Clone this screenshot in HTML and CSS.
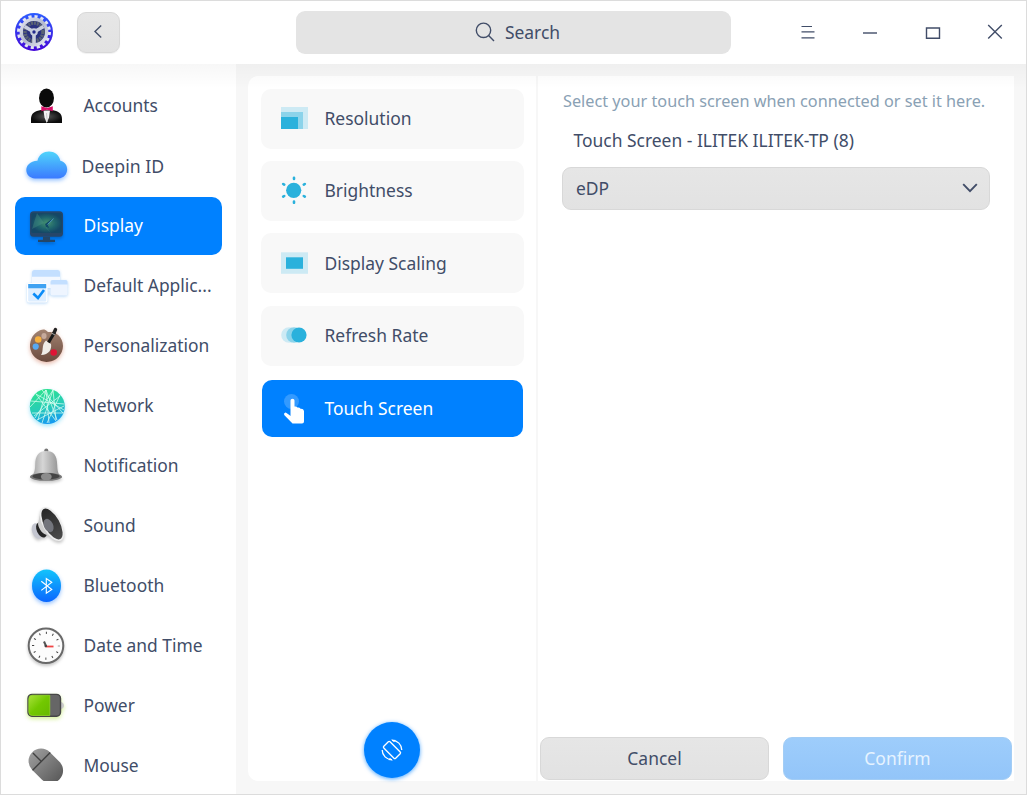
FILE: index.html
```html
<!DOCTYPE html>
<html lang="en">
<head>
<meta charset="utf-8">
<title>Control Center</title>
<link rel="stylesheet" href="styles.css">
</head>
<body>
<div class="window">
  <header class="titlebar">
    <svg class="logo" viewBox="0 0 40 40">
      <defs>
        <linearGradient id="lg" x1="0" y1="0" x2="0" y2="1"><stop offset="0" stop-color="#2b5cff"/><stop offset="1" stop-color="#4407d8"/></linearGradient>
        <linearGradient id="lm" x1="0" y1="0" x2="1" y2="1"><stop offset="0" stop-color="#e8eaf2"/><stop offset=".5" stop-color="#b3b9cd"/><stop offset="1" stop-color="#eceef6"/></linearGradient>
      </defs>
      <circle cx="20" cy="20" r="19" fill="url(#lg)"/>
      <circle cx="20" cy="20" r="15.3" fill="none" stroke="#e2e5f2" stroke-width="3.4" stroke-dasharray="3.1 2.91"/>
      <circle cx="20" cy="20" r="14.4" fill="url(#lm)"/>
      <circle cx="20" cy="20" r="11" fill="#2a3180"/>
      <circle cx="20" cy="20" r="9" fill="none" stroke="#596273" stroke-width="3.600" stroke-dasharray="2.2 .8"/>
      <path d="M20 20V31M20 20L10.500 14.500M20 20L29.500 14.500" stroke="#c9cedd" stroke-width="3.600"/>
      <circle cx="20" cy="20" r="3.800" fill="#c9cedd"/>
      <circle cx="20" cy="20" r="1.700" fill="#252b8e"/>
    </svg>
    <button class="btn back" aria-label="Back"><svg viewBox="0 0 10 14" width="10" height="14"><path d="M8.200 .5 2 6.500l6.200 6" class="line"/></svg></button>
    <div class="search">
      <svg viewBox="0 0 20 20" width="20" height="20"><circle cx="8.500" cy="8.300" r="7.200" class="line"/><path d="M13.600 13.400 19 18.900" class="line"/></svg>
      <span>Search</span>
    </div>
    <div class="controls">
      <svg viewBox="0 0 16 16" width="16" height="16"><path d="M1.500 2.500h10.500M1.500 7.800h13M1.500 13.800h13" class="line thin"/></svg>
      <svg viewBox="0 0 16 16" width="16" height="16"><path d="M1 9h14" class="line"/></svg>
      <svg viewBox="0 0 16 16" width="16" height="16"><path d="M1.500 4h13v10.300h-13z" class="line"/></svg>
      <svg viewBox="0 0 16 16" width="16" height="16"><path d="M1.200 1 14.800 14.600M14.800 1 1.200 14.600" class="line"/></svg>
    </div>
  </header>
  <div class="body">
    <nav class="sidebar">
      <a class="item">
        <svg class="icon" viewBox="0 0 48 48">
          <defs><radialGradient id="suit"><stop offset="0" stop-color="#555"/><stop offset="1" stop-color="#0b0b0b"/></radialGradient></defs>
          <ellipse cx="24.500" cy="16" rx="7.500" ry="9.400" fill="#0a0a0a"/>
          <path d="M9 41v-4c0-6 4-8 10-9h11c6 1 10 3 10 9v4z" fill="url(#suit)"/>
          <path d="M21.500 28.500h6.500l-1 7-2.300 5.500-2.200-5.500z" fill="#f3f3f3"/><path d="m24.500 31 .8 9" stroke="#bbb" stroke-width=".7"/>
          <path d="M19.300 24.300 25 26 30.800 24.300v5L25 27.800l-5.700 1.500z" fill="#d80f67"/>
        </svg><span>Accounts</span></a>
      <a class="item cloud">
        <svg class="icon glow-blue" viewBox="0 0 48 48">
          <defs><linearGradient id="cl" x1="0" y1="10" x2="0" y2="38" gradientUnits="userSpaceOnUse"><stop offset="0" stop-color="#4fd6fb"/><stop offset="1" stop-color="#3b78ff"/></linearGradient></defs>
          <path d="M13 37.500C1.500 37 .5 20.500 15.500 19.800 18 7.500 36 7.500 38.300 19.800 48.500 22 47 37.500 36 37.500z" fill="url(#cl)"/>
        </svg><span>Deepin ID</span></a>
      <a class="item active">
        <svg class="icon shade" viewBox="0 0 48 48">
          <defs><radialGradient id="scr"><stop offset="0" stop-color="#43906f"/><stop offset=".6" stop-color="#1e646d"/><stop offset="1" stop-color="#154766"/></radialGradient></defs>
          <rect x="8" y="9.300" width="33" height="25.500" rx="3.500" fill="#26466a"/>
          <rect x="9.300" y="11" width="30.500" height="20" rx="1.500" fill="url(#scr)"/>
          <path d="m15 11 7 10-12 6zM23 22l7-4 2-1-4 5-3 4 4 5-5-5z" fill="#4f9b88" opacity=".35"/>
          <path d="m30 17-7 5 1 3 3 1-1-3z" fill="#114a67"/>
          <path d="m31.500 16.500-6 6" stroke="#478bb4"/>
          <path d="M21 34.800h7v3h5v2.300H16v-2.300h5z" fill="#234668"/>
        </svg><span>Display</span></a>
      <a class="item">
        <svg class="icon glow-pale" viewBox="0 0 48 48">
          <rect x="10" y="8" width="28" height="18" rx="2.500" fill="#f3f8ff"/><path d="M10 14.700V10.500Q10 8 12.500 8h23q2.500 0 2.500 2.500v4.200z" fill="#c3dfff"/>
          <path d="M23 30.500h8" stroke="#d5e7fb" stroke-width="2"/>
          <rect x="28.500" y="18" width="17" height="15.500" rx="2" fill="#eef5ff"/><path d="M28.500 22.500V20q0-2 2-2h13q2 0 2 2v2.500z" fill="#c3dfff"/>
          <rect x="5" y="21" width="20.500" height="19.500" rx="2" fill="#fff"/><rect x="6.200" y="22" width="18" height="17.500" rx="1" fill="#deeeff"/><path d="M6.200 22h18v4.200h-18z" fill="#3fa2f2"/>
          <path d="m11.300 31.500 4.700 4.500 6-8" fill="none" stroke="#0a8cf8" stroke-width="2.600"/>
        </svg><span>Default Applic...</span></a>
      <a class="item">
        <svg class="icon glow-red" viewBox="0 0 48 48">
          <defs><linearGradient id="pal" x1="0" y1="0" x2="0" y2="1"><stop offset="0" stop-color="#a28371"/><stop offset="1" stop-color="#6b4a3e"/></linearGradient></defs>
          <path d="M18 8.300C25 5.500 24 11 28 10c5-.500 13 4.500 13 14a16.500 16.500 0 1 1-23-15.700z" fill="url(#pal)"/>
          <ellipse cx="22" cy="14" rx="2.600" ry="3" fill="#c6a99b"/>
          <circle cx="16.200" cy="17.500" r="3.300" fill="#f7b03e"/><circle cx="13.700" cy="24.600" r="3.100" fill="#58a9f2"/><circle cx="31.700" cy="30.500" r="3.300" fill="#df1435"/>
          <path d="m24 18.500 5 3.500c1 5-2 11-10 11 3-4 0-10 5-14.500z" fill="#efece8"/>
          <path d="m26.500 20.500 6-10" stroke="#181818" stroke-width="3"/><path d="m31.500 12 2-4.500" stroke="#222" stroke-width="3.400" stroke-linecap="round"/><path d="m33 13-3.500-2" stroke="#ddd" stroke-width=".7"/>
        </svg><span>Personalization</span></a>
      <a class="item">
        <svg class="icon glow-cyan" viewBox="0 0 48 48">
          <defs><linearGradient id="net" x1=".2" y1="0" x2=".5" y2="1"><stop offset="0" stop-color="#2ee48b"/><stop offset=".55" stop-color="#27cdb6"/><stop offset="1" stop-color="#159af0"/></linearGradient></defs>
          <circle cx="25.300" cy="24.500" r="17.500" fill="url(#net)"/>
          <path d="M8 25 24 8 35 38M24 8 16 38M24 8 27 41M31 8 13 36M31 8 20 41M31 8 34 38M14 12 42 28M14 12 34 39M9 19 42 22M12 34 38 14M15 38 42 24M10 31 42 31M20 8 41 31M38 13 25 41" fill="none" stroke="#dcfff2" stroke-width=".85" opacity=".85"/>
        </svg><span>Network</span></a>
      <a class="item">
        <svg class="icon shade" viewBox="0 0 48 48">
          <defs><linearGradient id="bell"><stop offset="0" stop-color="#999"/><stop offset=".4" stop-color="#d6d6d6"/><stop offset="1" stop-color="#858585"/></linearGradient></defs>
          <circle cx="24.300" cy="8.600" r="2" fill="#777"/>
          <path d="M8 36c2.500-3 5-4 5.200-13C13.300 13 17 9 24.300 9s10.700 4 10.900 14c.2 9 2.300 10 4.800 13z" fill="url(#bell)"/>
          <ellipse cx="24" cy="34.800" rx="16" ry="4" fill="#777"/><ellipse cx="24" cy="34.200" rx="13.500" ry="3.200" fill="#444"/>
          <ellipse cx="24.300" cy="34.800" rx="5.400" ry="3.800" fill="#8c8c8c"/>
        </svg><span>Notification</span></a>
      <a class="item">
        <svg class="icon shade" viewBox="0 0 48 48">
          <defs><linearGradient id="cone" x1="0" y1="0" x2="0" y2="1"><stop offset="0" stop-color="#262626"/><stop offset="1" stop-color="#4d4d4d"/></linearGradient></defs>
          <ellipse cx="15" cy="29" rx="4.800" ry="8" transform="rotate(-20 15 29)" fill="#c4c6d0"/>
          <ellipse cx="19.500" cy="28" rx="4.700" ry="8" transform="rotate(-25 19.500 28)" fill="#262626"/>
          <path d="M19 7 16 22c1 6 5 10 9 11l14 6z" fill="#cfcfcf"/>
          <ellipse cx="30" cy="22" rx="8.400" ry="18" transform="rotate(-29 30 22)" fill="url(#cone)" stroke="#ededed" stroke-width="1.600"/>
          <ellipse cx="26.500" cy="23.500" rx="4.600" ry="7" transform="rotate(-26 26.500 23.500)" fill="#73757c"/>
        </svg><span>Sound</span></a>
      <a class="item">
        <svg class="icon glow-blue" viewBox="0 0 48 48">
          <defs><linearGradient id="bt" x1="0" y1="0" x2="0" y2="1"><stop offset="0" stop-color="#12c4fb"/><stop offset="1" stop-color="#0a66ff"/></linearGradient></defs>
          <ellipse cx="24.500" cy="23.800" rx="14.500" ry="16.300" fill="url(#bt)"/>
          <path d="m19.300 19.300 10.500 8.200-5.500 3.800V16.500l5.500 3.700-10.500 8.200" fill="none" stroke="#fff" stroke-width="1.100"/>
        </svg><span>Bluetooth</span></a>
      <a class="item">
        <svg class="icon shade" viewBox="0 0 48 48">
          <circle cx="24" cy="23.700" r="17.300" fill="#fcfcfc" stroke="#696969" stroke-width="2"/>
          <circle cx="24" cy="23.700" r="12.900" fill="none" stroke="#444" stroke-width="2.200" stroke-dasharray="1 5.754" stroke-dashoffset=".5"/>
          <path d="m24 24-2-4.500" stroke="#555" stroke-width="2"/><path d="M23.500 24.500h8" stroke="#f04444" stroke-width="1.800"/><circle cx="23.800" cy="24" r="1.300" fill="#444"/>
        </svg><span>Date and Time</span></a>
      <a class="item">
        <svg class="icon glow-green" viewBox="0 0 48 48">
          <defs><linearGradient id="pw" x1="0" y1="0" x2="1" y2="1"><stop offset="0" stop-color="#a9e23a"/><stop offset=".5" stop-color="#72c800"/><stop offset="1" stop-color="#67b900"/></linearGradient></defs>
          <path d="M38 19.500q4 1 4 4t-4 4z" fill="#c9c9c9"/>
          <rect x="6" y="12.400" width="32.500" height="21.800" rx="4" fill="#666" stroke="#464646" stroke-width="1.400"/>
          <path d="M6.800 17q0-3.800 3.500-3.800h17.500v20.300H10.300q-3.500 0-3.500-3.500z" fill="url(#pw)" stroke="#94dc23" stroke-width=".7"/>
        </svg><span>Power</span></a>
      <a class="item">
        <svg class="icon" viewBox="0 0 48 48">
          <defs><linearGradient id="ms" x1="0" y1="0" x2="0" y2="1"><stop offset="0" stop-color="#9a9a9a"/><stop offset="1" stop-color="#5c5c5c"/></linearGradient></defs>
          <g transform="rotate(-45 24 24)"><rect x="11.500" y="4.500" width="25" height="38.500" rx="12.500" fill="url(#ms)"/><path d="M11.500 17.500h25M24 17.500v-12" fill="none" stroke="#414141" stroke-width="1.400"/></g>
        </svg><span>Mouse</span></a>
    </nav>
    <main class="content">
      <section class="menu">
        <a class="card"><svg viewBox="0 0 28 28"><path d="M1 3h27v22H1z" fill="#cdeaf4"/><path d="M1 8h22v17H1z" fill="#8bd3ea"/><path d="M1 13h17v12H1z" fill="#2ab1dc"/></svg><span>Resolution</span></a>
        <a class="card"><svg viewBox="0 0 28 28"><circle cx="13.700" cy="14.300" r="7.600" fill="#2ab1dc"/><path d="M14 1.700V3M14 25.500V26.800M3.200 8l1 .6M24.800 8l-1 .6M3.200 20.600l1-.6M24.800 20.600l-1-.6" stroke="#2ab1dc" stroke-width="2.600" stroke-linecap="round"/></svg><span>Brightness</span></a>
        <a class="card"><svg viewBox="0 0 28 28"><path d="M1 3.300h27v21.500H1z" fill="#cdeaf4"/><path d="M6 8.300h17v11.500H6z" fill="#2ab1dc"/></svg><span>Display Scaling</span></a>
        <a class="card"><svg viewBox="0 0 28 28"><circle cx="9" cy="14" r="7.800" fill="#cdeaf4"/><circle cx="14" cy="14" r="7.800" fill="#8bd3ea"/><circle cx="19" cy="14" r="7.600" fill="#2ab1dc"/></svg><span>Refresh Rate</span></a>
        <a class="card active"><svg class="touch" viewBox="0 0 28 32"><circle cx="11.500" cy="9.500" r="7.500" fill="#fff" opacity=".2"/><path d="M10.500 8.500q0-1.800 2-1.800t2 1.800v6q1.800-.4 3 1 2-.4 3 1.200 3-.3 3.500 2.300V29.500q0 2-2 2H12.500L4.200 23q-.8-2 1.200-2.500 1 0 5.100 3.500z" fill="#fff"/></svg><span>Touch Screen</span></a>
        <button class="rotate" aria-label="Rotate"><svg viewBox="0 0 24 24" width="24" height="24"><g fill="none" stroke="#fff" stroke-width="1.300"><rect x="7.600" y="3.600" width="8.800" height="16.800" rx="1.200" transform="rotate(-45 12 12)"/><path d="M12 2.300A9.700 9.700 0 0 1 21.800 12M12 21.700A9.700 9.700 0 0 1 2.200 12"/></g><path d="m11 1.500 5 .4-2 2.100zM13 22.500l-5-.4 2-2.100z" fill="#fff"/></svg></button>
      </section>
      <section class="detail">
        <p class="hint">Select your touch screen when connected or set it here.</p>
        <p class="device">Touch Screen - ILITEK ILITEK-TP (8)</p>
        <div class="btn select"><span>eDP</span><svg viewBox="0 0 16 10" width="16" height="10"><path d="m1.200 1.200 6.800 7 6.800-7" class="line bold"/></svg></div>
        <div class="actions"><button class="btn">Cancel</button><button class="btn confirm">Confirm</button></div>
      </section>
    </main>
  </div>
</div>
</body>
</html>
```
FILE: styles.css
```css
* { box-sizing: border-box; }
body { margin: 0; font-family: "Noto Sans", sans-serif; font-size: 17.45px; line-height: 24px; color: #414d68; }
button { font: inherit; color: inherit; padding: 0; }
svg { display: block; flex: none; }
.line { fill: none; stroke: #414d68; stroke-width: 1.4; }
.thin { stroke-width: 1.2; }
.bold { stroke-width: 1.9; }
.window { width: 1027px; height: 795px; border: 1px solid #dcdcdc; display: flex; flex-direction: column; background: #fff; overflow: hidden; }
.titlebar { height: 63px; flex: none; display: flex; align-items: center; padding-left: 13px; }
.logo { width: 40px; height: 40px; margin-top: -1px; }
.btn { height: 43px; border: 1px solid #d8d8d8; border-radius: 9px; background: linear-gradient(#e6e6e6, #e2e2e2); display: flex; align-items: center; justify-content: center; }
.back { width: 43px; height: 41px; margin-left: 23px; margin-top: -1px; padding-right: 1px; box-shadow: 0 1px 1px rgba(0, 0, 0, .06); }
.search { width: 435px; height: 43px; margin-left: 176px; border-radius: 9px; background: #e4e4e4; display: flex; align-items: center; justify-content: center; gap: 10px; padding: 0 0 2px 8px; }
.controls { margin: -1px 0 0 auto; display: flex; gap: 46.3px; padding-right: 23px; }
.body { flex: 1; display: flex; min-height: 0; position: relative; }
.body::after { content: ""; position: absolute; inset: 0 0 auto; height: 25px; background: linear-gradient(rgba(0, 0, 0, .033), transparent); pointer-events: none; }
.sidebar { width: 235px; height: 717px; padding: 12px 14px 0; overflow: hidden; font-size: 17.4px; }
.item { height: 60px; display: flex; align-items: center; padding: 0 0 2px 7px; gap: 13.5px; white-space: nowrap; border-radius: 10px; }
.item .icon { width: 48px; height: 48px; margin-top: 2px; }
.item.active { height: 58px; margin: 1px 0; padding-bottom: 2px; background: #0081ff; color: #fff; }
.item.active .icon { margin-top: 2px; }
.item.cloud { gap: 11.500px; padding-top: 0; padding-bottom: 0; font-size: 17.65px; }
.item.cloud .icon { margin-top: -2px; }
.shade { filter: drop-shadow(0 2px 1.5px rgba(0, 0, 0, .22)); }
.glow-blue { filter: drop-shadow(0 2px 2px rgba(20, 120, 255, .45)); }
.glow-pale { filter: drop-shadow(0 1px 1.5px rgba(80, 160, 240, .4)); }
.glow-red { filter: drop-shadow(0 2px 2px rgba(190, 60, 20, .35)); }
.glow-cyan { filter: drop-shadow(0 2px 2px rgba(20, 190, 240, .4)); }
.glow-green { filter: drop-shadow(0 2px 2px rgba(150, 220, 0, .4)); }
.content { flex: 1; display: flex; background: #f7f7f7; padding: 12px 12px 13px; }
.menu { width: 290px; border-right: 2px solid #f7f7f7; background: #fff; border-radius: 10px 0 0 10px; padding: 12.6px 12.5px 3px 13px; display: flex; flex-direction: column; gap: 12.4px; }
.card { height: 60px; display: flex; align-items: center; gap: 16.5px; padding: 0 0 1px 19px; border-radius: 10px; background: #f8f8f8; }
.card svg { width: 28px; height: 28px; }
.card .touch { height: 32px; }
.card.active { height: 57.500px; margin: 1.4px 1px; padding-left: 18px; background: #0081ff; color: #fff; }
.rotate { width: 56px; height: 56px; margin: auto auto 0; border: 0; border-radius: 50%; background: #0081ff; display: flex; align-items: center; justify-content: center; box-shadow: 0 1px 4px rgba(0, 129, 255, .7); }
.detail { flex: 1; background: #fff; padding: 13px 2px 1px; display: flex; flex-direction: column; }
.hint { margin: 0 0 0 23px; font-size: 16.25px; color: #8aa1b4; white-space: nowrap; }
.device { margin: 15px 0 0 33.5px; }
.select { width: 428px; margin: 15px 0 0 22px; padding: 0 11px 1px 13px; justify-content: space-between; }
.actions { margin-top: auto; display: flex; gap: 14px; }
.actions .btn { flex: 1; padding-bottom: 2px; }
.actions .confirm { background: linear-gradient(#9ecdfb, #93c5f9); border-color: #a3cdf5; color: #e6f3ff; }
```
